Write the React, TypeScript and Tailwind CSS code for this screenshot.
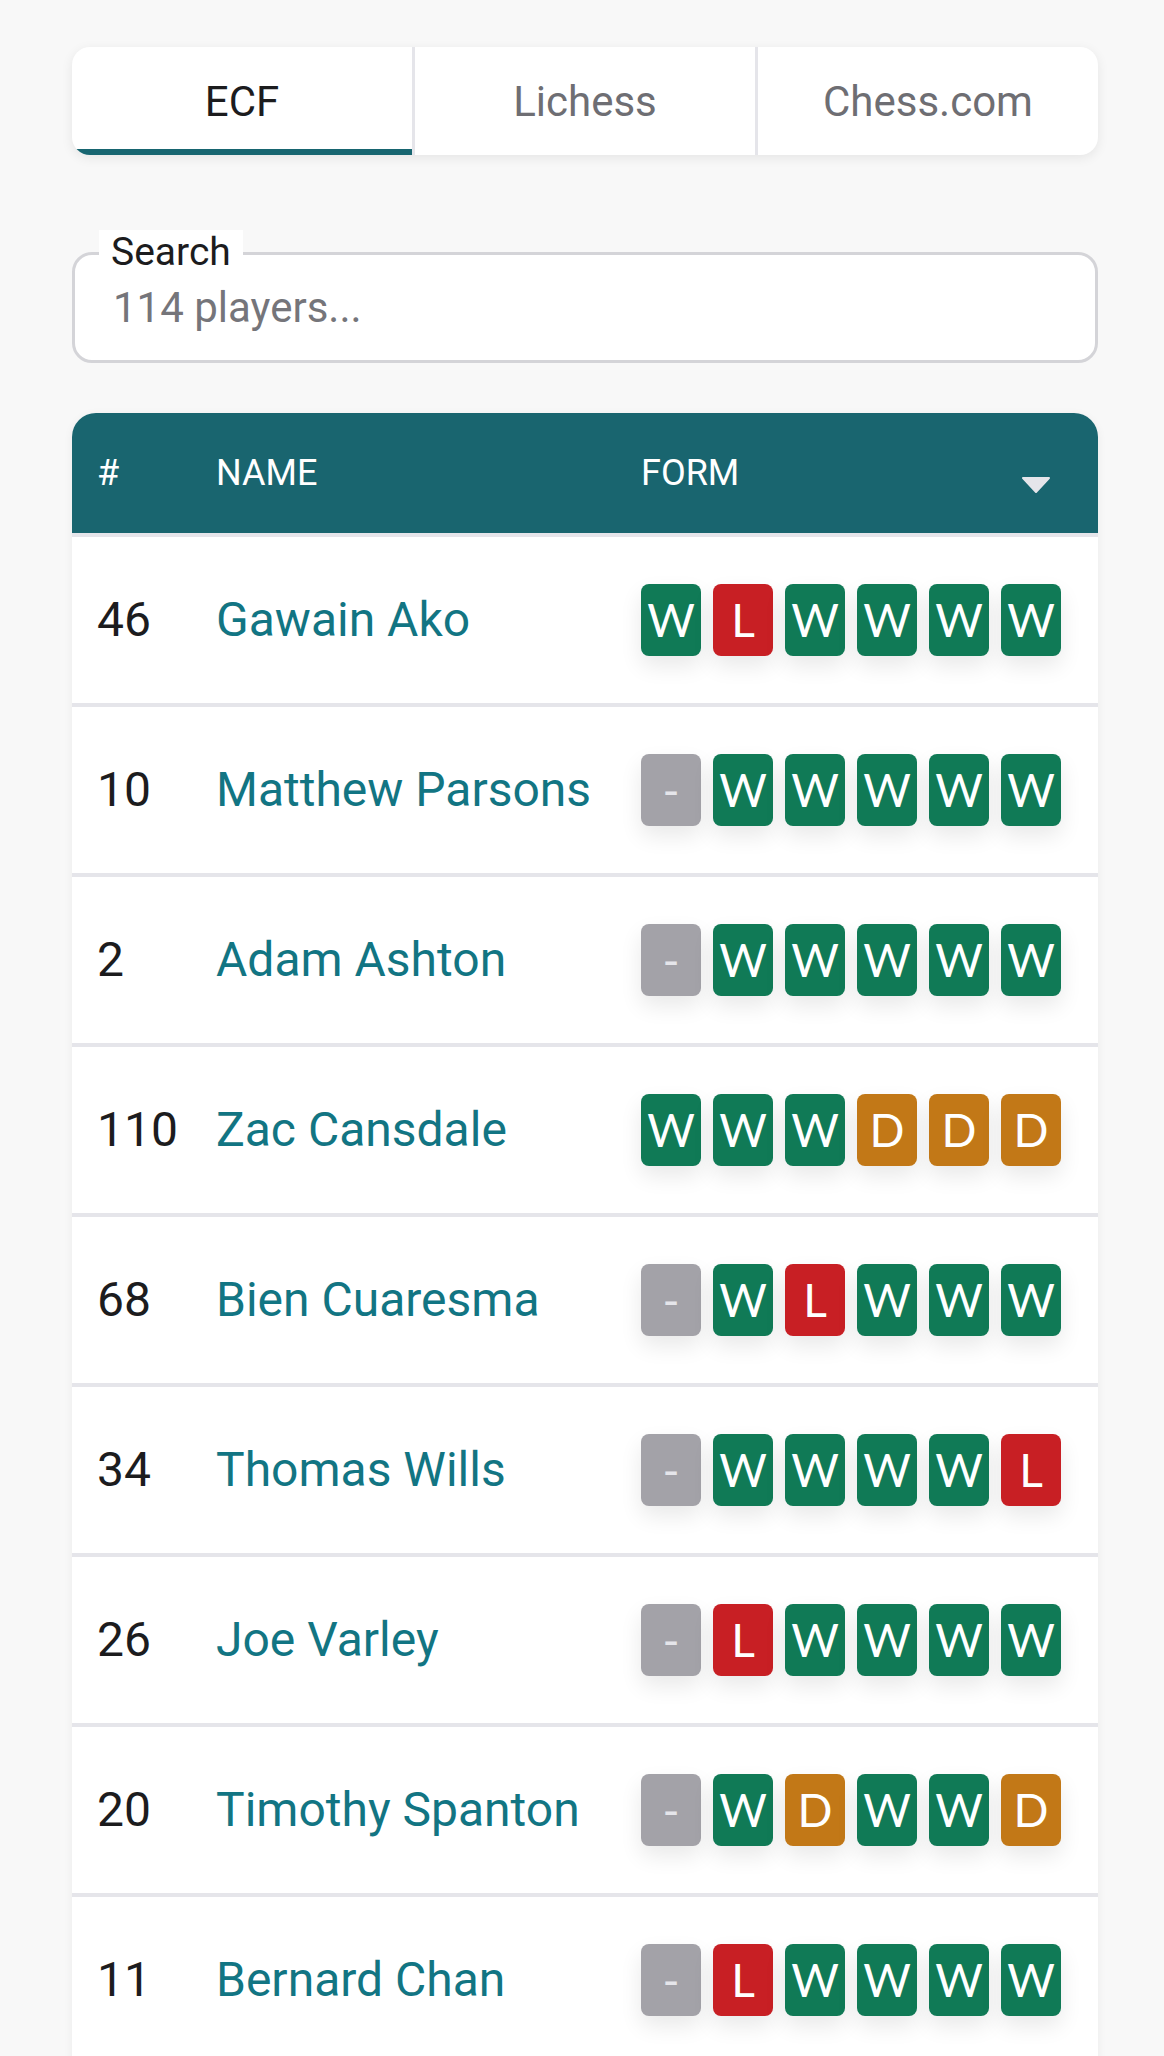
import { useState } from 'react';

type Result = 'W' | 'L' | 'D' | '-';

interface Player {
  rank: number;
  name: string;
  form: Result[];
}

const players: Player[] = [
  { rank: 46, name: 'Gawain Ako', form: ['W', 'L', 'W', 'W', 'W', 'W'] },
  { rank: 10, name: 'Matthew Parsons', form: ['-', 'W', 'W', 'W', 'W', 'W'] },
  { rank: 2, name: 'Adam Ashton', form: ['-', 'W', 'W', 'W', 'W', 'W'] },
  { rank: 110, name: 'Zac Cansdale', form: ['W', 'W', 'W', 'D', 'D', 'D'] },
  { rank: 68, name: 'Bien Cuaresma', form: ['-', 'W', 'L', 'W', 'W', 'W'] },
  { rank: 34, name: 'Thomas Wills', form: ['-', 'W', 'W', 'W', 'W', 'L'] },
  { rank: 26, name: 'Joe Varley', form: ['-', 'L', 'W', 'W', 'W', 'W'] },
  { rank: 20, name: 'Timothy Spanton', form: ['-', 'W', 'D', 'W', 'W', 'D'] },
  { rank: 11, name: 'Bernard Chan', form: ['-', 'L', 'W', 'W', 'W', 'W'] },
];

const tabs = ['ECF', 'Lichess', 'Chess.com'];

const badgeColors: Record<Result, string> = {
  W: 'bg-[#107a56] text-white',
  L: 'bg-[#c81f24] text-white',
  D: 'bg-[#c27817] text-white',
  '-': 'bg-[#a3a2a8] text-[#e5e5ea]',
};

function FormBadge({ result }: { result: Result }) {
  return (
    <span
      className={`flex h-[72px] w-[60px] shrink-0 items-center justify-center rounded-[8px] font-['Lato',sans-serif] text-[46px] leading-none shadow-[0_10px_22px_rgba(0,0,0,0.09)] ${badgeColors[result]}`}
    >
      {result}
    </span>
  );
}

export default function App() {
  const [active, setActive] = useState(0);
  const [query, setQuery] = useState('');

  const visible = players.filter((p) =>
    p.name.toLowerCase().includes(query.toLowerCase()),
  );

  return (
    <div className="h-screen overflow-hidden bg-[#f8f8f8] pl-[72px] pr-[66px] pt-[47px] font-['Roboto',sans-serif]">
      {/* Source tabs */}
      <div className="flex h-[108px] overflow-hidden rounded-[18px] bg-white shadow-[0_3px_12px_rgba(0,0,0,0.08)]">
        {tabs.map((tab, i) => (
          <button
            key={tab}
            type="button"
            onClick={() => setActive(i)}
            className={`relative flex flex-1 items-center justify-center text-[42px] ${
              i > 0 ? 'border-l-[3px] border-[#e5e5ea]' : ''
            } ${active === i ? 'text-[#1c1c1e]' : 'text-[#6e6e73]'}`}
          >
            {tab}
            {active === i && (
              <span className="absolute inset-x-0 bottom-0 h-[6px] bg-[#176570]" />
            )}
          </button>
        ))}
      </div>

      {/* Search */}
      <div className="relative mt-[97px]">
        <span className="absolute left-[27px] top-[-22px] bg-white px-[12px] text-[39px] leading-[44px] text-[#1c1c1e]">
          Search
        </span>
        <input
          value={query}
          onChange={(e) => setQuery(e.target.value)}
          placeholder={`${players.length + 105} players...`}
          className="h-[111px] w-full rounded-[20px] border-[3px] border-[#d4d4d8] bg-white px-[38px] text-[42px] text-[#1c1c1e] placeholder:text-[#75757a] focus:outline-none"
        />
      </div>

      {/* Players table */}
      <div className="mt-[50px] overflow-hidden rounded-t-[24px] bg-white shadow-[0_2px_10px_rgba(0,0,0,0.06)]">
        <div className="flex h-[124px] items-center border-b-[4px] border-[#e5e5ea] bg-[#19656f] pl-[25px] pr-[37px] text-[36px] text-white">
          <span className="w-[119px] shrink-0">#</span>
          <span className="w-[425px] shrink-0">NAME</span>
          <span className="flex-1">FORM</span>
          <svg
            viewBox="0 0 28 16"
            className="mr-[11px] mt-[24px] h-[16px] w-[28px]"
            aria-hidden="true"
          >
            <path d="M1 1 H27 L14 15 Z" fill="#e5e5ea" stroke="#e5e5ea" strokeLinejoin="round" strokeWidth="2" />
          </svg>
        </div>

        {visible.map((p) => (
          <div
            key={p.rank}
            className="flex h-[170px] items-center border-b-[4px] border-[#e5e5ea] pl-[25px] pr-[37px]"
          >
            <span className="w-[119px] shrink-0 text-[48px] text-[#1c1c1e]">{p.rank}</span>
            <span className="w-[425px] shrink-0 text-[48px] text-[#127583]">{p.name}</span>
            <div className="flex gap-[12px]">
              {p.form.map((r, i) => (
                <FormBadge key={i} result={r} />
              ))}
            </div>
          </div>
        ))}
      </div>
    </div>
  );
}
